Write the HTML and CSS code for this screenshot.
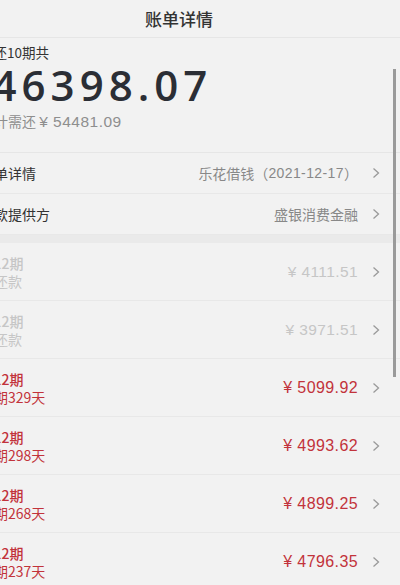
FILE: index.html
```html
<!DOCTYPE html>
<html lang="zh-CN">
<head>
  <meta charset="UTF-8" />
  <meta name="viewport" content="width=device-width, initial-scale=1.0"/>
  <title>账单详情</title>
  <link rel="stylesheet" href="styles.css">
</head>
<body>
  <div class="page">
    <div class="header">账单详情</div>

    <div class="summary">
      <div class="summary-title">待还10期共</div>
      <div class="summary-amount"><span class="yen">¥</span>46398.07</div>
      <div class="summary-total">共计需还 <span class="num">¥ 54481.09</span></div>
    </div>

    <div class="row info">
      <span class="label">账单详情</span>
      <span class="value">乐花借钱（<span class="date">2021-12-17</span>）<svg class="chev" viewBox="0 0 8 12"><polyline points="1.5,1.5 6.5,6 1.5,10.5"/></svg></span>
    </div>
    <div class="row info">
      <span class="label">借款提供方</span>
      <span class="value">盛银消费金融<svg class="chev" viewBox="0 0 8 12"><polyline points="1.5,1.5 6.5,6 1.5,10.5"/></svg></span>
    </div>

    <div class="band"></div>

    <div class="row plan paid">
      <div class="plan-left"><div class="term">1/12期</div><div class="status">已还款</div></div>
      <span class="value"><span class="money">¥ 4111.51</span><svg class="chev" viewBox="0 0 8 12"><polyline points="1.5,1.5 6.5,6 1.5,10.5"/></svg></span>
    </div>
    <div class="row plan paid">
      <div class="plan-left"><div class="term">2/12期</div><div class="status">已还款</div></div>
      <span class="value"><span class="money">¥ 3971.51</span><svg class="chev" viewBox="0 0 8 12"><polyline points="1.5,1.5 6.5,6 1.5,10.5"/></svg></span>
    </div>
    <div class="row plan due">
      <div class="plan-left"><div class="term">3/12期</div><div class="status">到期329天</div></div>
      <span class="value"><span class="money">¥ 5099.92</span><svg class="chev" viewBox="0 0 8 12"><polyline points="1.5,1.5 6.5,6 1.5,10.5"/></svg></span>
    </div>
    <div class="row plan due">
      <div class="plan-left"><div class="term">4/12期</div><div class="status">到期298天</div></div>
      <span class="value"><span class="money">¥ 4993.62</span><svg class="chev" viewBox="0 0 8 12"><polyline points="1.5,1.5 6.5,6 1.5,10.5"/></svg></span>
    </div>
    <div class="row plan due">
      <div class="plan-left"><div class="term">5/12期</div><div class="status">到期268天</div></div>
      <span class="value"><span class="money">¥ 4899.25</span><svg class="chev" viewBox="0 0 8 12"><polyline points="1.5,1.5 6.5,6 1.5,10.5"/></svg></span>
    </div>
    <div class="row plan due">
      <div class="plan-left"><div class="term">6/12期</div><div class="status">到期237天</div></div>
      <span class="value"><span class="money">¥ 4796.35</span><svg class="chev" viewBox="0 0 8 12"><polyline points="1.5,1.5 6.5,6 1.5,10.5"/></svg></span>
    </div>
  </div>

  <!-- scroll indicator -->
  <div class="scrollbar"></div>
</body>
</html>
```

FILE: styles.css
```css
html, body {
  margin: 0;
  padding: 0;
  height: 100%;
  overflow: hidden;
}
body {
  font-family: "Liberation Sans", "Noto Sans CJK SC", sans-serif;
  background: #f2f2f2;
  color: #333;
}
.page {
  margin-left: -20px;
}
.header {
  height: 37px;
  line-height: 38px;
  text-align: center;
  padding-right: 22px;
  font-family: "Noto Sans CJK SC", sans-serif;
  font-size: 17px;
  font-weight: 500;
  color: #333;
  border-bottom: 1px solid #e6e6e6;
}
.summary {
  height: 115px;
  padding-top: 5px;
  box-sizing: border-box;
  border-bottom: 1px solid #e6e6e6;
}
.summary-title {
  height: 19px;
  font-family: "Noto Sans CJK SC", sans-serif;
  font-size: 13.5px;
  line-height: 19px;
  color: #333;
}
.summary-amount {
  height: 46px;
  font-family: "Open Sans", sans-serif;
  font-size: 42px;
  font-weight: 600;
  letter-spacing: 5px;
  line-height: 46px;
  color: #2b2e35;
}
.yen {
  font-size: 22px;
  letter-spacing: 0;
}
.summary-total {
  height: 20px;
  margin-top: 3px;
  font-family: "Noto Sans CJK SC", sans-serif;
  font-size: 14px;
  line-height: 20px;
  color: #8e8e8e;
}
.summary-total .num {
  font-family: "Liberation Sans", sans-serif;
  font-size: 15.5px;
  letter-spacing: 0.5px;
}
.row {
  display: flex;
  align-items: center;
  justify-content: space-between;
  padding-right: 20px;
  border-bottom: 1px solid #e8e8e8;
}
.info {
  height: 40px;
  font-family: "Noto Sans CJK SC", sans-serif;
  font-size: 14px;
}
.info .label {
  color: #333;
}
.value {
  display: flex;
  align-items: center;
  color: #888;
}
.date {
  font-family: "Liberation Sans", sans-serif;
  letter-spacing: 0.4px;
}
.chev {
  width: 8px;
  height: 12px;
  margin-left: 14px;
  fill: none;
  stroke: #9a9a9a;
  stroke-width: 1.3;
}
.band {
  height: 8px;
  background: #eaeaea;
}
.plan {
  height: 57px;
}
.plan-left {
  font-family: "Noto Sans CJK SC", sans-serif;
  font-size: 14px;
  line-height: 18px;
}
.term {
  font-weight: 500;
}
.money {
  font-size: 16px;
  letter-spacing: 0.4px;
}
.paid .plan-left,
.paid .money {
  color: #c6c6c6;
}
.paid .money {
  font-size: 15.5px;
}
.due .plan-left,
.due .money {
  color: #c2333b;
}
.scrollbar {
  position: absolute;
  left: 393px;
  top: 69px;
  width: 3px;
  height: 308px;
  background: #9a9a9a;
}
```
